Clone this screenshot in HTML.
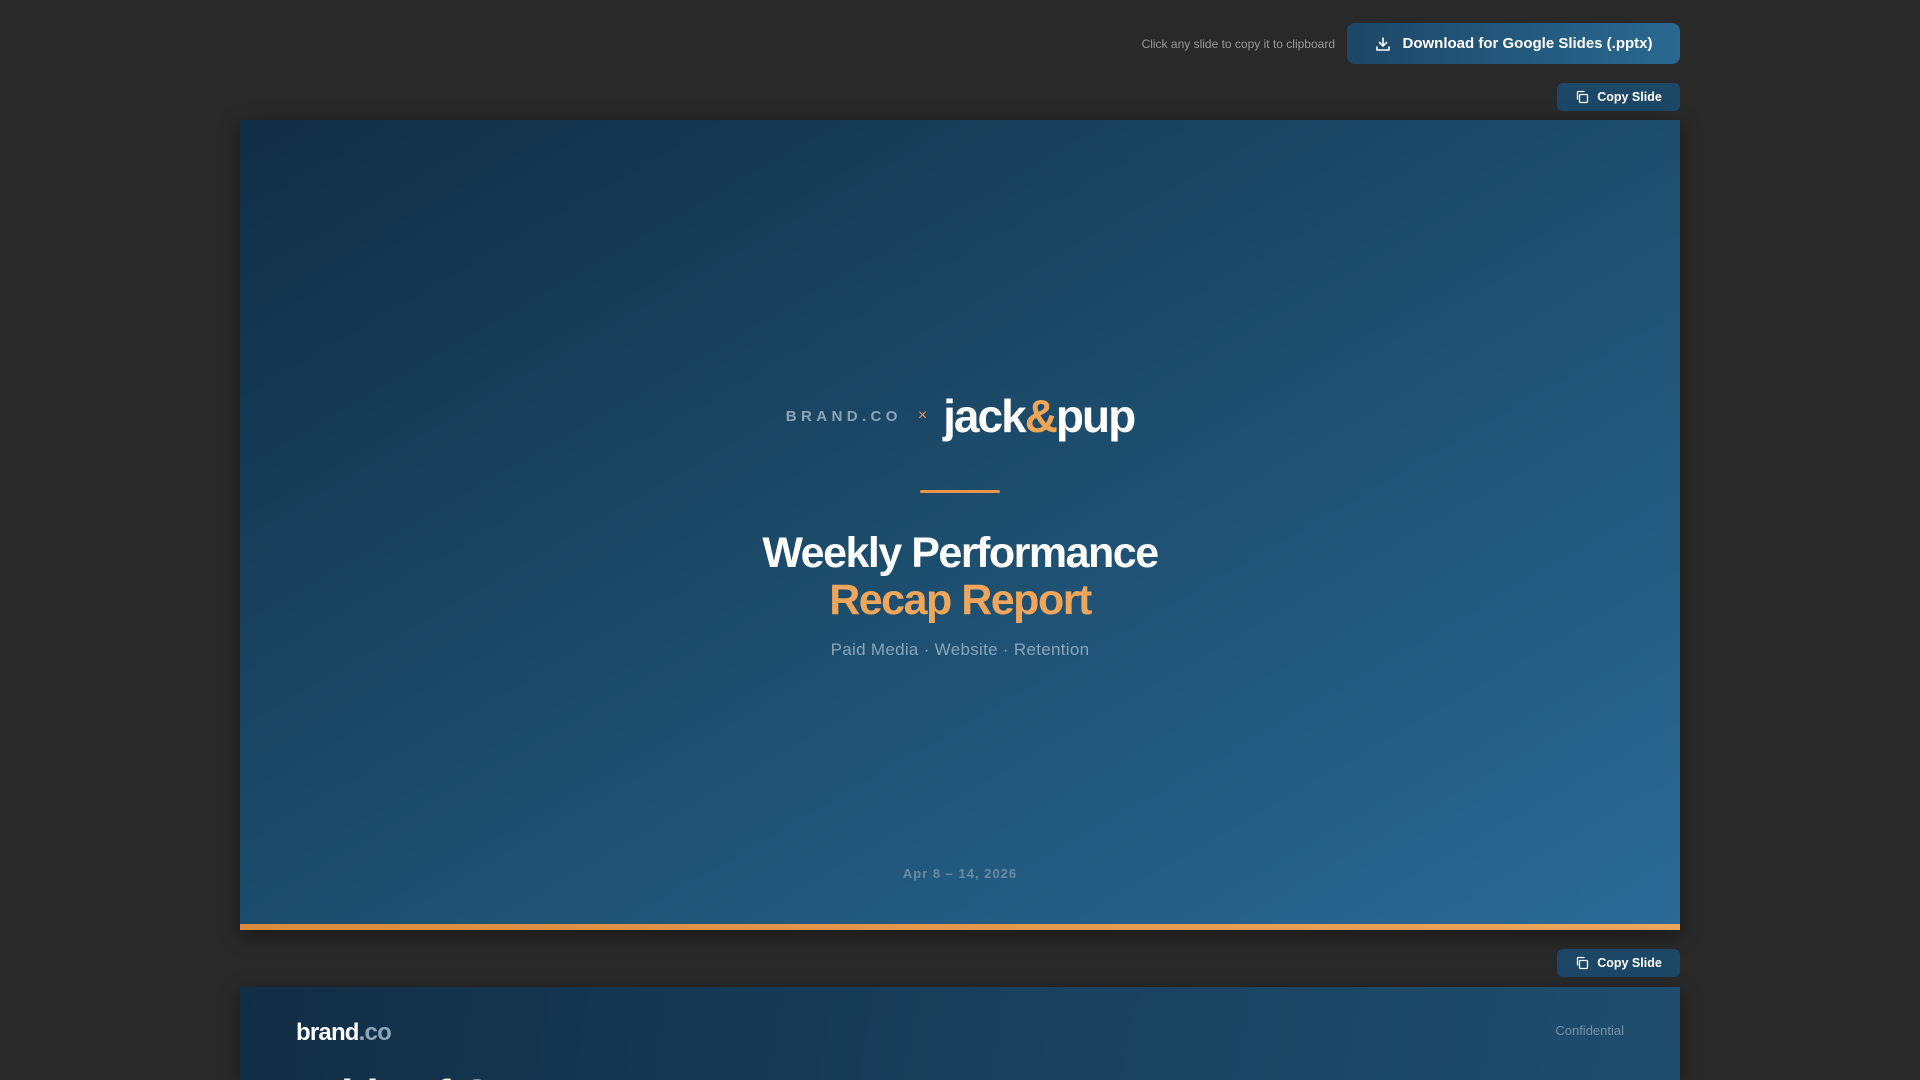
<!DOCTYPE html>
<html><head><meta charset="utf-8"><style>
*{margin:0;padding:0;box-sizing:border-box}
html,body{width:1920px;height:1080px;overflow:hidden;background:#292929;font-family:"Liberation Sans",sans-serif}
#root{position:relative;width:1920px;height:1080px;overflow:hidden}
.hint{position:absolute;right:585px;top:37px;font-size:12px;color:#9a9a9a}
.dl{position:absolute;left:1347px;top:23px;width:333px;height:41px;border-radius:8px;background:linear-gradient(90deg,#1d4767,#2a6891);color:#fff;font-weight:bold;font-size:15px;display:flex;align-items:center;justify-content:center;gap:12px}
.copy{position:absolute;left:1557px;width:123px;height:28px;border-radius:6px;background:#1d4767;color:#fff;font-weight:bold;font-size:12.5px;display:flex;align-items:center;justify-content:center;gap:8px}
.slide{position:absolute;left:240px;width:1440px;height:810px;background:linear-gradient(150deg,#112d45 0%,#1d4d6d 50%,#2a6a97 100%);overflow:hidden;box-shadow:0 6px 20px rgba(0,0,0,.4)}
.bar{position:absolute;left:0;bottom:0;width:100%;height:6px;background:linear-gradient(90deg,#d98b3f,#eea65c)}
.c{position:absolute;left:0;width:100%;text-align:center}
</style></head><body><div id="root">
<div class="hint">Click any slide to copy it to clipboard</div>
<div class="dl"><svg width="16" height="16" viewBox="0 0 16 16" fill="none" stroke="#fff" stroke-width="1.6" stroke-linecap="round" stroke-linejoin="round"><path d="M8 2v8M4.5 6.5L8 10l3.5-3.5M2 11v3h12v-3"/></svg>Download for Google Slides (.pptx)</div>
<div class="copy" style="top:83px"><svg width="14" height="14" viewBox="0 0 14 14" fill="none" stroke="#fff" stroke-width="1.3"><rect x="4.5" y="4.5" width="8" height="8" rx="1.2"/><path d="M2.5 9.5V2.5a1 1 0 0 1 1-1h6"/></svg>Copy Slide</div>
<div class="slide" style="top:120px">
  <div class="c" style="top:266px;height:60px;display:flex;justify-content:center;align-items:center">
    <span style="font-weight:bold;font-size:15px;letter-spacing:4.4px;color:#8ea5b8">BRAND.CO</span>
    <span style="color:#e89a4c;font-size:16px;margin:0 16px 0 16px">×</span>
    <span style="font-weight:bold;font-size:46px;letter-spacing:-2px;color:#fff">jack<span style="color:#eea556">&amp;</span>pup</span>
  </div>
  <div style="position:absolute;left:680px;top:370px;width:80px;height:3px;background:#e8954a;border-radius:2px"></div>
  <div class="c" style="top:410px;font-weight:bold;font-size:43px;letter-spacing:-1.5px;line-height:47px;color:#fff">Weekly Performance<br><span style="color:#efa65a">Recap Report</span></div>
  <div class="c" style="top:520px;font-size:17px;color:#8ba4b7;letter-spacing:.3px">Paid Media · Website · Retention</div>
  <div class="c" style="top:746px;font-size:13px;font-weight:bold;color:#6c8aa1;letter-spacing:1px">Apr 8 – 14, 2026</div>
  <div class="bar"></div>
</div>
<div class="copy" style="top:949px"><svg width="14" height="14" viewBox="0 0 14 14" fill="none" stroke="#fff" stroke-width="1.3"><rect x="4.5" y="4.5" width="8" height="8" rx="1.2"/><path d="M2.5 9.5V2.5a1 1 0 0 1 1-1h6"/></svg>Copy Slide</div>
<div class="slide" style="top:987px;height:93px;background:linear-gradient(100deg,#112d45 0%,#1a4260 60%,#1f4d6e 100%)">
  <div style="position:absolute;left:56px;top:32px;font-weight:bold;font-size:24px;letter-spacing:-.8px;color:#fff">brand<span style="color:#8ea5b8">.co</span></div>
  <div style="position:absolute;right:56px;top:36px;font-size:13px;color:#7891a6">Confidential</div>
  <div style="position:absolute;left:56px;top:84px;font-weight:bold;font-size:44px;letter-spacing:-1.5px;color:#fff">Table of Contents</div>
</div>
</div></body></html>
